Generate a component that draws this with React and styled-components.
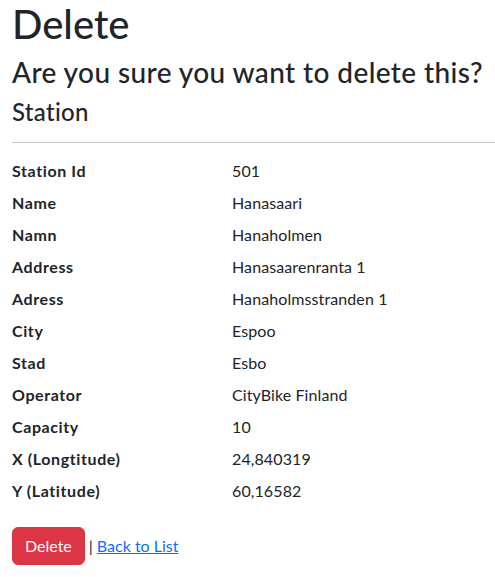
import React from "react";
import styled, { createGlobalStyle } from "styled-components";

const GlobalStyle = createGlobalStyle`
  html, body { margin: 0; padding: 0; background: #fff; }
  body {
    font-family: "Lato", "Noto Sans", sans-serif;
    font-size: 16px;
    line-height: 1.5;
    color: #212529;
  }
`;

const Page = styled.main`
  padding: 0 0 0 12px;
`;

const Title = styled.h1`
  margin: 0 0 8px;
  font-size: 40px;
  font-weight: 500;
  line-height: 1.2;
  letter-spacing: 0;
`;

const Question = styled.h3`
  margin: 0 0 8px;
  font-size: 28px;
  font-weight: 500;
  line-height: 1.2;
  letter-spacing: 0.4px;
`;

const Entity = styled.h4`
  margin: 0 0 8px;
  font-size: 24px;
  font-weight: 500;
  line-height: 1.2;
  letter-spacing: 0.3px;
`;

const Rule = styled.hr`
  margin: 16px 0 16px;
  border: 0;
  border-top: 1px solid #c8c9ca;
`;

const Details = styled.dl`
  display: grid;
  grid-template-columns: 220px 1fr;
  margin: 0 0 16px;
`;

const Term = styled.dt`
  font-weight: 700;
  margin: 0 0 8px;
  letter-spacing: 0.6px;
`;

const Value = styled.dd`
  margin: 0 0 8px;
  letter-spacing: 0.1px;
`;

const Form = styled.form`
  display: flex;
  align-items: center;
  gap: 4px;
  margin: 0;
`;

const DangerButton = styled.button`
  font-family: inherit;
  font-size: 16px;
  line-height: 24px;
  padding: 6px 12px;
  border: 1px solid #dc3545;
  border-radius: 6px;
  background: #dc3545;
  color: #fff;
  cursor: pointer;
  letter-spacing: 0;
`;

const Sep = styled.span`
  color: #212529;
`;

const Link = styled.a`
  color: #0d6efd;
  text-decoration: underline;
`;

const rows = [
  ["Station Id", "501"],
  ["Name", "Hanasaari"],
  ["Namn", "Hanaholmen"],
  ["Address", "Hanasaarenranta 1"],
  ["Adress", "Hanaholmsstranden 1"],
  ["City", "Espoo"],
  ["Stad", "Esbo"],
  ["Operator", "CityBike Finland"],
  ["Capacity", "10"],
  ["X (Longtitude)", "24,840319"],
  ["Y (Latitude)", "60,16582"],
];

export default function App() {
  return (
    <>
      <GlobalStyle />
      <Page>
        <Title>Delete</Title>
        <Question>Are you sure you want to delete this?</Question>
        <div>
          <Entity>Station</Entity>
          <Rule />
          <Details>
            {rows.map(([k, v]) => (
              <React.Fragment key={k}>
                <Term>{k}</Term>
                <Value>{v}</Value>
              </React.Fragment>
            ))}
          </Details>
          <Form onSubmit={(e) => e.preventDefault()}>
            <DangerButton type="submit">Delete</DangerButton>
            <Sep>|</Sep>
            <Link href="#">Back to List</Link>
          </Form>
        </div>
      </Page>
    </>
  );
}
